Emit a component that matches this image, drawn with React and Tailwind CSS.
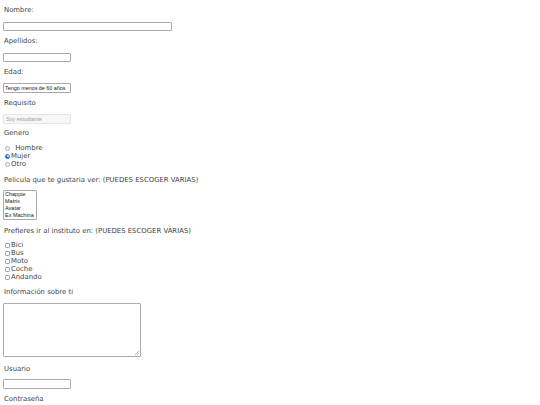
const labelCls = "block h-[8px] leading-[8px] text-[6.9px] text-[#444] whitespace-nowrap";
const font = { fontFamily: "'DejaVu Sans', Verdana, sans-serif" };

function Field({ className, children }) {
  return <div className={className}>{children}</div>;
}

function Radio({ checked, label, gap }) {
  return (
    <div className="flex items-center h-[8px] leading-[8px] text-[6.9px] text-[#444]">
      {checked ? (
        <span className="ml-[2px] w-[5px] h-[5px] rounded-full bg-[#1a73e8] border border-[#1a73e8] flex items-center justify-center">
          <span className="w-[2px] h-[2px] rounded-full bg-white" />
        </span>
      ) : (
        <span className="ml-[2px] w-[5px] h-[5px] rounded-full border border-[#aaa] bg-white" />
      )}
      <span className={gap}>{label}</span>
    </div>
  );
}

function Check({ label }) {
  return (
    <div className="flex items-center h-[8px] leading-[8px] text-[6.9px] text-[#444]">
      <span className="ml-[2px] w-[5px] h-[5px] rounded-[1px] border border-[#aaa] bg-white" />
      <span className="ml-[1px]">{label}</span>
    </div>
  );
}

export default function App() {
  return (
    <div className="w-[540px] h-[405px] overflow-hidden bg-white px-[3px]" style={font}>
      <span className={labelCls + " mt-[6px] pl-[1px]"}>Nombre:</span>
      <Field className="mt-[8px] w-[169px] h-[9px] border border-[#aaa] rounded-[1px] bg-white" />

      <span className={labelCls + " mt-[6px] pl-[1px]"}>Apellidos:</span>
      <Field className="mt-[8px] w-[68px] h-[9px] border border-[#aaa] rounded-[1px] bg-white" />

      <span className={labelCls + " mt-[6px] pl-[1px]"}>Edad:</span>
      <div
        className="mt-[7px] w-[68px] h-[10px] border border-[#aaa] rounded-[1px] bg-white text-[5.4px] leading-[8px] pl-[1px] text-[#222] whitespace-nowrap overflow-hidden"
        style={{ fontFamily: "'Liberation Sans', Arial, sans-serif" }}
      >
        Tengo menos de 60 años
      </div>

      <span className={labelCls + " mt-[6px] pl-[1px]"}>Requisito</span>
      <div
        className="mt-[7px] w-[68px] h-[10px] border border-[#e6e6e6] rounded-[1px] bg-[#f7f7f7] text-[5.4px] leading-[8px] pl-[2px] text-[#a0a0a0] whitespace-nowrap overflow-hidden"
        style={{ fontFamily: "'Liberation Sans', Arial, sans-serif" }}
      >
        Soy estudiante
      </div>

      <span className={labelCls + " mt-[5px] pl-[1px]"}>Genero</span>
      <div className="mt-[7px]">
        <Radio label={"\u00a0Hombre"} gap="ml-[3px]" />
        <Radio checked label="Mujer" gap="ml-[1px]" />
        <Radio label="Otro" gap="ml-[1px]" />
      </div>

      <span className={labelCls + " mt-[8px] pl-[1px]"}>
        Pelicula que te gustaria ver: (PUEDES ESCOGER VARIAS)
      </span>
      <div
        className="mt-[6px] w-[34px] h-[30px] border border-[#aaa] rounded-[1px] bg-white text-[5.5px] leading-[7px] pl-[1px] text-[#222] overflow-hidden whitespace-nowrap"
        style={{ fontFamily: "'Liberation Sans', Arial, sans-serif" }}
      >
        <div>Chappie</div>
        <div>Matrix</div>
        <div>Avatar</div>
        <div>Ex Machina</div>
      </div>

      <span className={labelCls + " mt-[7px] pl-[1px]"}>
        Prefieres ir al instituto en: (PUEDES ESCOGER VARIAS)
      </span>
      <div className="mt-[6px]">
        <Check label="Bici" />
        <Check label="Bus" />
        <Check label="Moto" />
        <Check label="Coche" />
        <Check label="Andando" />
      </div>

      <span className={labelCls + " mt-[7px] pl-[1px]"}>Información sobre ti</span>
      <div className="relative mt-[7px] w-[138px] h-[54px] border border-[#aaa] rounded-[1px] bg-white">
        <svg className="absolute right-[1px] bottom-[1px]" width="4" height="4" viewBox="0 0 4 4">
          <path d="M4 0 L0 4 M4 2 L2 4" stroke="#999" strokeWidth="0.7" />
        </svg>
      </div>

      <span className={labelCls + " mt-[8px] pl-[1px]"}>Usuario</span>
      <Field className="mt-[6px] w-[68px] h-[10px] border border-[#aaa] rounded-[1px] bg-white" />

      <span className={labelCls + " mt-[6px] pl-[1px]"}>Contraseña</span>
    </div>
  );
}
